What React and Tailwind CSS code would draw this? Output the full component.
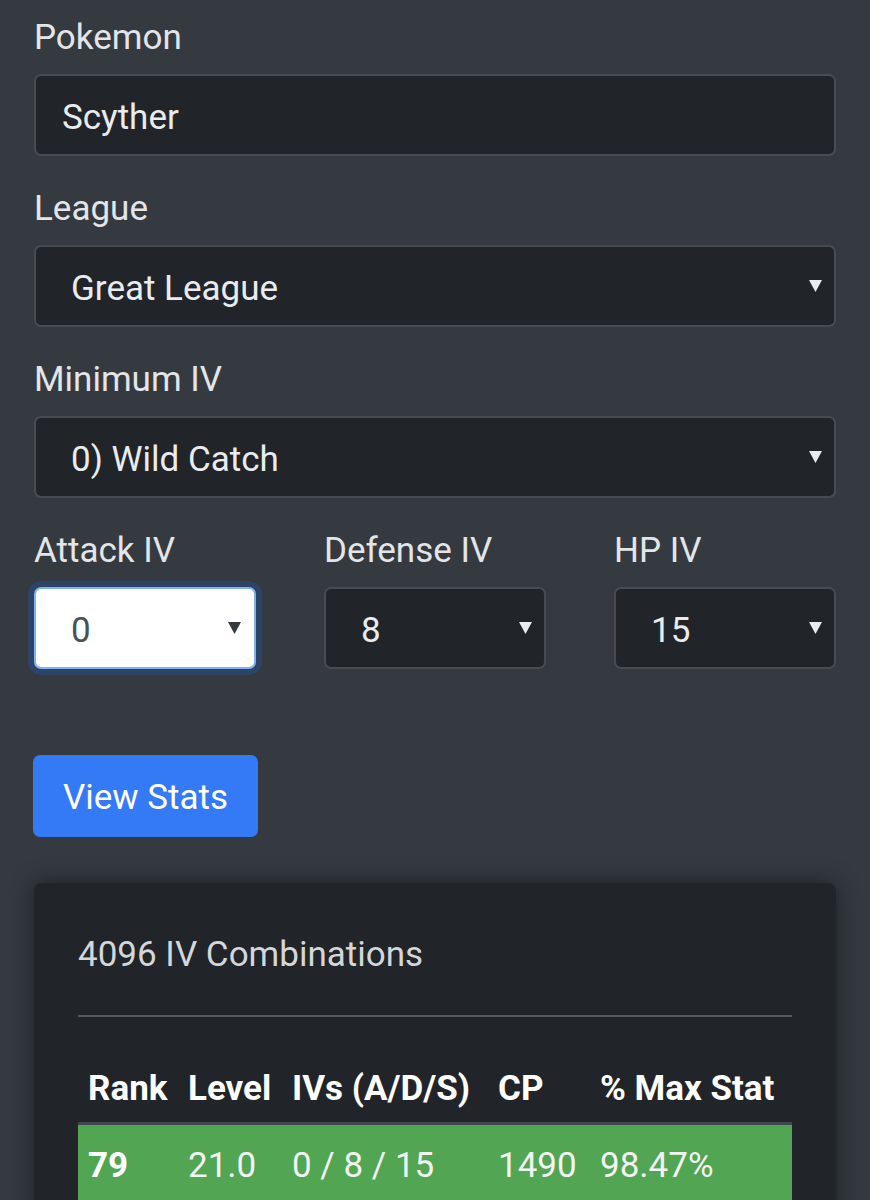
import React from 'react';

const font = { fontFamily: 'Roboto, "Liberation Sans", sans-serif' };

function Caret({ dark }) {
  return (
    <svg width="13" height="12" viewBox="0 0 13 12" className="shrink-0 -mt-[6px]">
      <polygon points="0,0 13,0 6.5,12" fill={dark ? '#343a40' : '#e9ecef'} />
    </svg>
  );
}

function Label({ children }) {
  return <div className="text-[35px] leading-[52px] text-[#e3e5e8] pt-[3px] mb-[10px]">{children}</div>;
}

function Select({ value, focused }) {
  if (focused) {
    return (
      <div className="h-[82px] flex items-center justify-between pl-[35px] pr-[13px] pt-[6px] rounded-[7px] bg-white border-2 border-[#7fb2f0] shadow-[0_0_0_6px_#2d4466] text-[35px] text-[#495057]">
        <span>{value}</span>
        <Caret dark />
      </div>
    );
  }
  return (
    <div className="h-[82px] flex items-center justify-between pl-[35px] pr-[12px] pt-[6px] rounded-[7px] bg-[#212428] border-2 border-[#474c52] text-[35px] text-[#e9ecef]">
      <span>{value}</span>
      <Caret />
    </div>
  );
}

const th = 'text-left font-bold pl-[10px] pt-[13px] pb-[7px] whitespace-nowrap';
const td = 'pl-[10px] pt-[15px] pb-[9px] whitespace-nowrap text-[#f2f4f2]';

export default function App() {
  return (
    <div className="min-h-[1200px] bg-[#343a40] px-[34px] pt-[9px] overflow-hidden" style={font}>
      <Label>Pokemon</Label>
      <div className="h-[82px] flex items-center pl-[26px] pt-[6px] rounded-[7px] bg-[#212428] border-2 border-[#474c52] text-[35px] text-[#e9ecef]">
        Scyther
      </div>

      <div className="mt-[24px]">
        <Label>League</Label>
        <Select value="Great League" />
      </div>

      <div className="mt-[24px]">
        <Label>Minimum IV</Label>
        <Select value="0) Wild Catch" />
      </div>

      <div className="mt-[24px] grid grid-cols-3 gap-x-[68px]">
        <div>
          <Label>Attack IV</Label>
          <Select value="0" focused />
        </div>
        <div>
          <Label>Defense IV</Label>
          <Select value="8" />
        </div>
        <div>
          <Label>HP IV</Label>
          <Select value="15" />
        </div>
      </div>

      <button className="mt-[86px] h-[82px] w-[225px] pt-[5px] rounded-[7px] bg-[#3479f5] text-white text-[35px] -ml-[1px]">
        View Stats
      </button>

      <div className="mt-[46px] rounded-[8px] bg-[#212428] shadow-[0_0_24px_rgba(0,0,0,0.45)] px-[44px] pt-[46px] pb-[40px]">
        <div className="text-[35px] leading-[52px] text-[#d4d6d9]">4096 IV Combinations</div>
        <div className="mt-[34px] h-[2px] bg-[#565b61]" />
        <table className="mt-[33px] w-full text-[35px] leading-[52px] text-white border-collapse">
          <thead>
            <tr className="border-b-[3px] border-[#41474e]">
              <th className={`w-[100px] ${th}`}>Rank</th>
              <th className={`w-[104px] ${th}`}>Level</th>
              <th className={`w-[206px] ${th}`}>IVs (A/D/S)</th>
              <th className={`w-[102px] ${th}`}>CP</th>
              <th className={th}>% Max Stat</th>
            </tr>
          </thead>
          <tbody>
            <tr className="bg-[#52a552]">
              <td className={`${td} font-bold !text-white`}>79</td>
              <td className={td}>21.0</td>
              <td className={td}>0 / 8 / 15</td>
              <td className={td}>1490</td>
              <td className={td}>98.47%</td>
            </tr>
          </tbody>
        </table>
      </div>
    </div>
  );
}
